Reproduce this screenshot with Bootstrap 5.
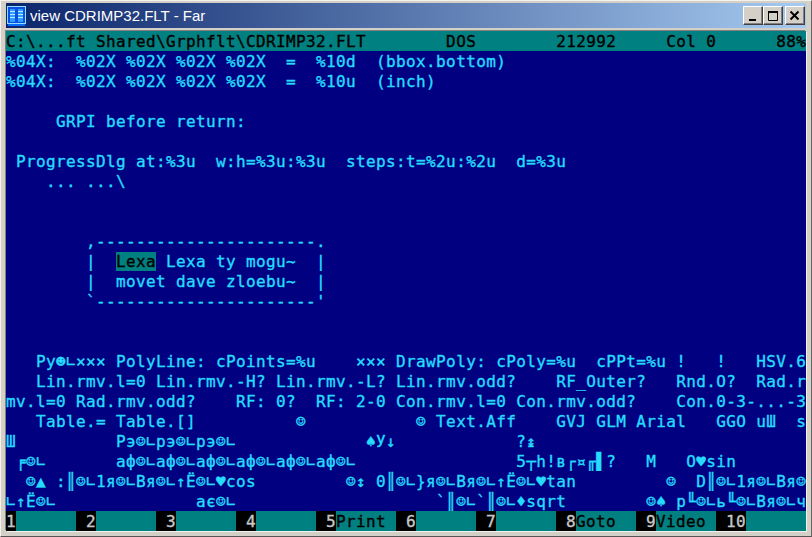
<!DOCTYPE html>
<html lang="en">
<head>
<meta charset="utf-8">
<title>view CDRIMP32.FLT - Far</title>
<link href="https://cdn.jsdelivr.net/npm/bootstrap@5.3.0/dist/css/bootstrap.min.css" rel="stylesheet">
<style>
html,body{margin:0;width:812px;height:537px;overflow:hidden;background:#d4d0c8}
.farwin{width:812px;height:537px;padding:2px 5px 5px;background:#d4d0c8;border-top:1px solid #f4f2ec;border-left:1px solid #f4f2ec;border-right:1px solid #666;border-bottom:1px solid #555}
.captionbar{height:25px;margin-bottom:3px;background:linear-gradient(90deg,#0a246a,#a6caf0);padding:2px 1px;color:#fff;font:15px/21px "Liberation Sans",sans-serif}
.appicon{width:19px;height:20px;margin-right:4px;flex:none}
.capbtn{width:20px;height:19px;padding:0;border-radius:0;background:#d4d0c8;border:1px solid;border-color:#fff #404040 #404040 #fff;box-shadow:inset -1px -1px 0 #808080}
.capbtn svg{display:block;margin:auto}
.capbtn.gapped{margin-left:2px}
.console{width:800px;height:500px;background:#000080;color:#25dcff;font:16px/22px "DejaVu Sans Mono",monospace;letter-spacing:.37px;-webkit-text-stroke:.35px currentColor;box-shadow:-1px -1px 0 #808080,1px 1px 0 #f4f2ec}
.rowline{height:20px;width:800px;overflow:hidden;white-space:pre}
.statusline{background:#008080;color:#000}
.hilite{background:#008080;color:#000}
.keybar{height:20px;width:800px;white-space:pre}
.keynum{background:#000;color:#c8c8c8;flex:none}
.keylabel{background:#008080;color:#000;width:60px;flex:none}
.w1{width:10px}.w2{width:20px}.w3{width:30px}
</style>
</head>
<body>
<div class="farwin d-flex flex-column">
  <div class="captionbar d-flex align-items-center">
    <svg class="appicon" viewBox="0 0 19 20"><rect width="19" height="20" fill="#0a2a9a"/><rect x=".5" y=".5" width="18" height="17" fill="#0d4fe0" stroke="#8fdcff"/><rect x="3" y="3" width="5" height="13" fill="#2f9cff"/><rect x="11" y="3" width="5" height="13" fill="#2f9cff"/><path d="M3 5.5h5M3 8.5h5M3 11.5h5M11 5.5h5M11 8.5h5M11 11.5h5" stroke="#b8ecff"/><rect x="1" y="18" width="17" height="2" fill="#0a6cff"/></svg>
    <span class="flex-grow-1">view CDRIMP32.FLT - Far</span>
    <button class="btn capbtn" type="button" aria-label="Minimize"><svg width="12" height="12" viewBox="0 0 12 12"><rect x="2" y="9" width="7" height="2" fill="#000"/></svg></button>
    <button class="btn capbtn" type="button" aria-label="Maximize"><svg width="12" height="12" viewBox="0 0 12 12"><path d="M1.5 2.5h9v8h-9z" fill="none" stroke="#000"/><rect x="1" y="1" width="10" height="2" fill="#000"/></svg></button>
    <button class="btn capbtn gapped" type="button" aria-label="Close"><svg width="12" height="12" viewBox="0 0 12 12"><path d="M1.5 1.5l8 8M9.5 1.5l-8 8" stroke="#000" stroke-width="2"/></svg></button>
  </div>
  <div class="console">
<div class="rowline statusline">C:\...ft Shared\Grphflt\CDRIMP32.FLT        DOS        212992     Col 0      88%</div>
<div class="rowline">%04X:  %02X %02X %02X %02X  =  %10d  (bbox.bottom)</div>
<div class="rowline">%04X:  %02X %02X %02X %02X  =  %10u  (inch)</div>
<div class="rowline"></div>
<div class="rowline">     GRPI before return:</div>
<div class="rowline"></div>
<div class="rowline"> ProgressDlg at:%3u  w:h=%3u:%3u  steps:t=%2u:%2u  d=%3u</div>
<div class="rowline">    ... ...\</div>
<div class="rowline"></div>
<div class="rowline"></div>
<div class="rowline">        ,----------------------.</div>
<div class="rowline">        |  <span class="hilite">Lexa</span> Lexa ty mogu~  |</div>
<div class="rowline">        |  movet dave zloebu~  |</div>
<div class="rowline">        `----------------------'</div>
<div class="rowline"></div>
<div class="rowline"></div>
<div class="rowline">   Py☻∟××× PolyLine: cPoints=%u    ××× DrawPoly: cPoly=%u  cPPt=%u !   !   HSV.6</div>
<div class="rowline">   Lin.rmv.l=0 Lin.rmv.-H? Lin.rmv.-L? Lin.rmv.odd?    RF_Outer?   Rnd.O?  Rad.r</div>
<div class="rowline">mv.l=0 Rad.rmv.odd?    RF: 0?  RF: 2-0 Con.rmv.l=0 Con.rmv.odd?    Con.0-3-...-3</div>
<div class="rowline">   Table.= Table.[]          ☺           ☺ Text.Aff    GVJ GLM Arial   GGO uШ  s</div>
<div class="rowline">Ш          Рэ☺∟рэ☺∟рэ☺∟             ♠У↓            ?↨</div>
<div class="rowline"> ╒☺∟       аф☺∟аф☺∟аф☺∟аф☺∟аф☺∟аф☺∟                5┬h!в┌¤╓▌?   M   O♥sin</div>
<div class="rowline">  ☺▲ :║☺∟1я☺∟Bя☺∟↑Ё☺∟♥cos         ☺↕ 0║☺∟}я☺∟Bя☺∟↑Ё☺∟♥tan         ☺  D║☺∟1я☺∟Bя☺</div>
<div class="rowline">∟↑Ё☺∟              ає☺∟                    `║☺∟`║☺∟♦sqrt        ☺♠ p╙☺∟ь╙☺∟Bя☺∟ч</div>
<div class="keybar d-flex"><span class="keynum w1">1</span><span class="keylabel"></span><span class="keynum w2"> 2</span><span class="keylabel"></span><span class="keynum w2"> 3</span><span class="keylabel"></span><span class="keynum w2"> 4</span><span class="keylabel"></span><span class="keynum w2"> 5</span><span class="keylabel">Print</span><span class="keynum w2"> 6</span><span class="keylabel"></span><span class="keynum w2"> 7</span><span class="keylabel"></span><span class="keynum w2"> 8</span><span class="keylabel">Goto</span><span class="keynum w2"> 9</span><span class="keylabel">Video</span><span class="keynum w3"> 10</span><span class="keylabel"></span></div>
  </div>
</div>
<script src="https://cdn.jsdelivr.net/npm/bootstrap@5.3.0/dist/js/bootstrap.bundle.min.js"></script>
</body>
</html>
